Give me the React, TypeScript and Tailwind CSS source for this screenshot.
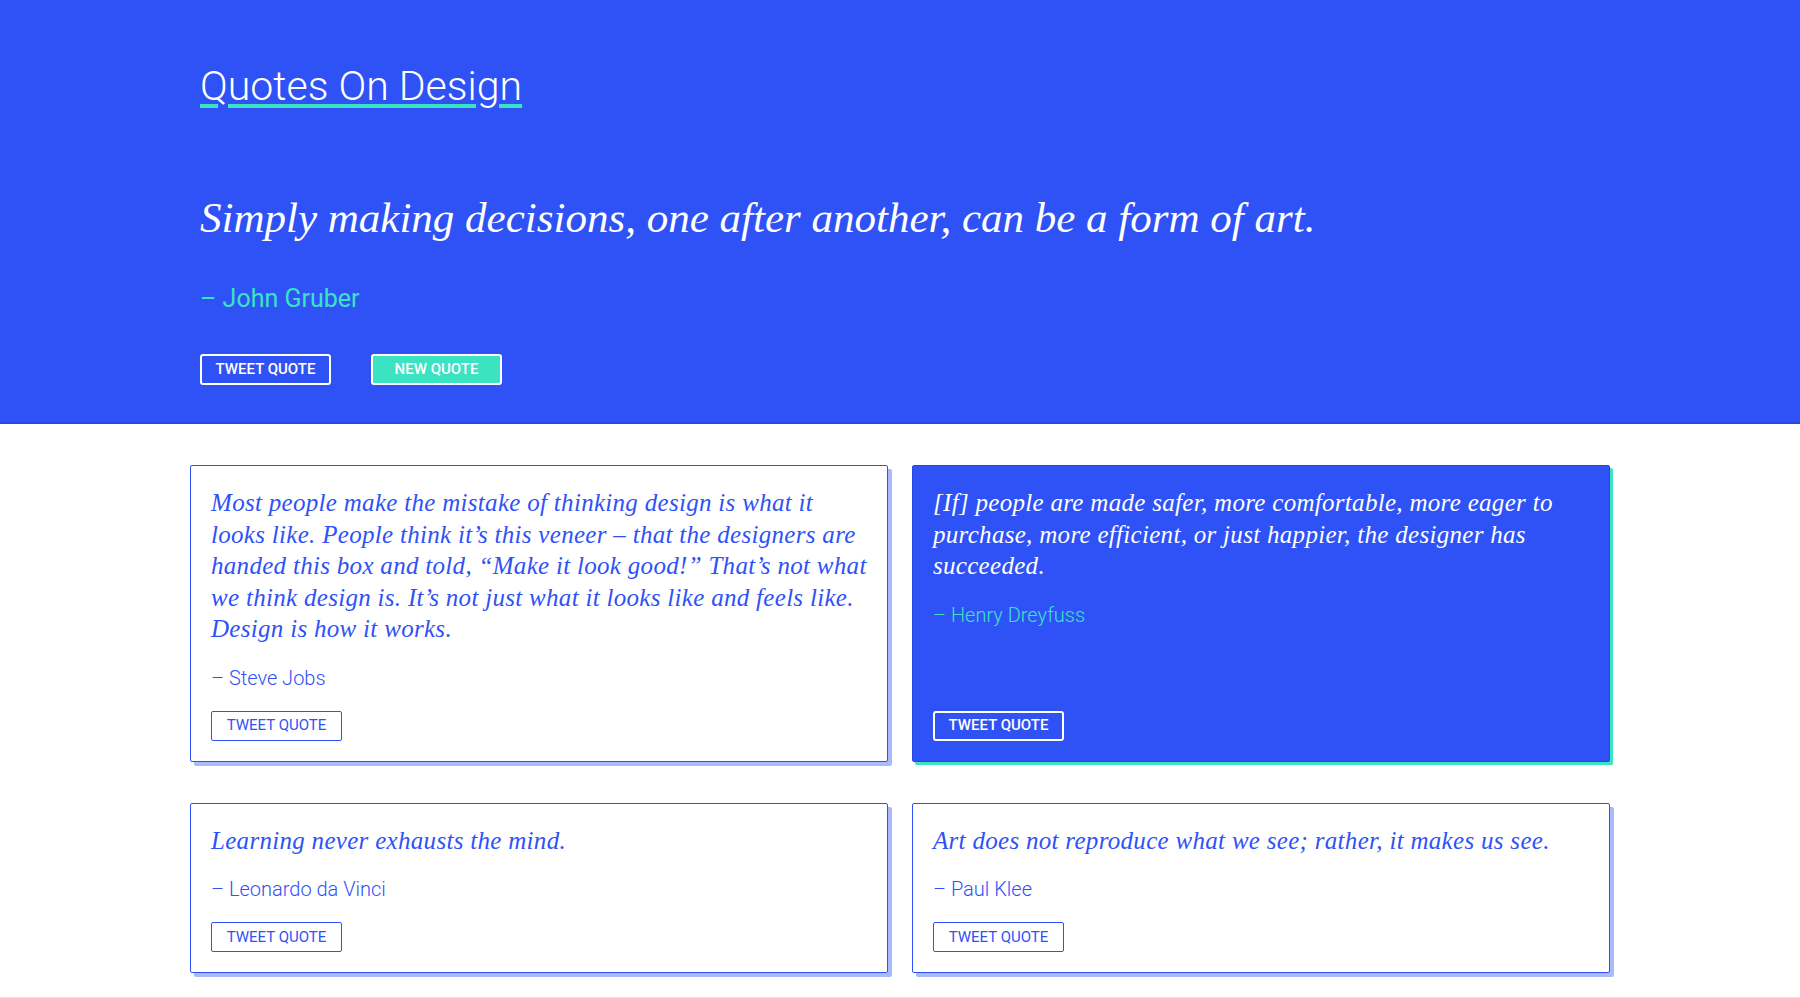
const quotes = [
  {
    text: "Most people make the mistake of thinking design is what it looks like. People think it’s this veneer – that the designers are handed this box and told, “Make it look good!” That’s not what we think design is. It’s not just what it looks like and feels like. Design is how it works.",
    author: "Steve Jobs",
    featured: false,
  },
  {
    text: "[If] people are made safer, more comfortable, more eager to purchase, more efficient, or just happier, the designer has succeeded.",
    author: "Henry Dreyfuss",
    featured: true,
  },
  {
    text: "Learning never exhausts the mind.",
    author: "Leonardo da Vinci",
    featured: false,
  },
  {
    text: "Art does not reproduce what we see; rather, it makes us see.",
    author: "Paul Klee",
    featured: false,
  },
]

function QuoteCard({ text, author, featured }: { text: string; author: string; featured: boolean }) {
  return (
    <article
      className={
        featured
          ? "flex flex-col rounded-[2px] border border-[#2846e0] bg-[#2f52f6] p-5 shadow-[3px_3px_0_#3be3c2]"
          : "flex flex-col rounded-[2px] border border-[#2f52f6] bg-white p-5 shadow-[4px_4px_0_#a9b9fb]"
      }
    >
      <p
        className={
          "pt-[1px] font-['Liberation_Serif',serif] text-[25px] tracking-[0.3px] italic leading-[31.5px] " +
          (featured ? "text-white" : "text-[#2f52f6]")
        }
      >
        {text}
      </p>
      <p
        className={
          "mt-[19px] text-[20px] font-light leading-[28px] " + (featured ? "text-[#3be3c2]" : "text-[#2f52f6]")
        }
      >
        – {author}
      </p>
      <div className="mt-auto pt-[19px]">
        {featured ? (
          <button className="h-[30px] w-[131px] rounded-[3px] border-2 border-white text-[15px] font-medium text-white uppercase">
            Tweet Quote
          </button>
        ) : (
          <button className="h-[30px] w-[131px] rounded-[2px] border border-[#2f52f6] text-[15px] text-[#2f52f6] uppercase">
            Tweet Quote
          </button>
        )}
      </div>
    </article>
  )
}

export default function App() {
  return (
    <div className="min-h-screen bg-white font-['Roboto',sans-serif]">
      <header className="border-b-2 border-[#2846e0] bg-[#2f52f6]">
        <div className="mx-auto w-[1400px] pt-[61px] pb-[37px]">
          <h1 className="text-[41px] leading-[50px] font-light">
            <a
              href="#"
              className="text-white underline decoration-[#3be3c2] decoration-4 underline-offset-[4px]"
            >
              Quotes On Design
            </a>
          </h1>
          <p className="mt-[79px] font-['Liberation_Serif',serif] text-[43px] leading-[56px] text-white italic">
            Simply making decisions, one after another, can be a form of art.
          </p>
          <p className="mt-[37px] text-[25px] leading-[32px] text-[#3be3c2]">– John Gruber</p>
          <div className="mt-[39px] flex gap-10">
            <button className="h-[31px] w-[131px] rounded-[3px] border-2 border-white text-[15px] font-medium text-white uppercase">
              Tweet Quote
            </button>
            <button className="h-[31px] w-[131px] rounded-[3px] border-2 border-white bg-[#3be3c2] text-[15px] font-medium text-white uppercase">
              New Quote
            </button>
          </div>
        </div>
      </header>

      <main className="mx-auto grid w-[1420px] grid-cols-2 gap-x-6 gap-y-[41px] pt-[41px] pb-[24px]">
        {quotes.map((q) => (
          <QuoteCard key={q.author} {...q} />
        ))}
      </main>
      <div className="border-t border-gray-200" />
    </div>
  )
}
